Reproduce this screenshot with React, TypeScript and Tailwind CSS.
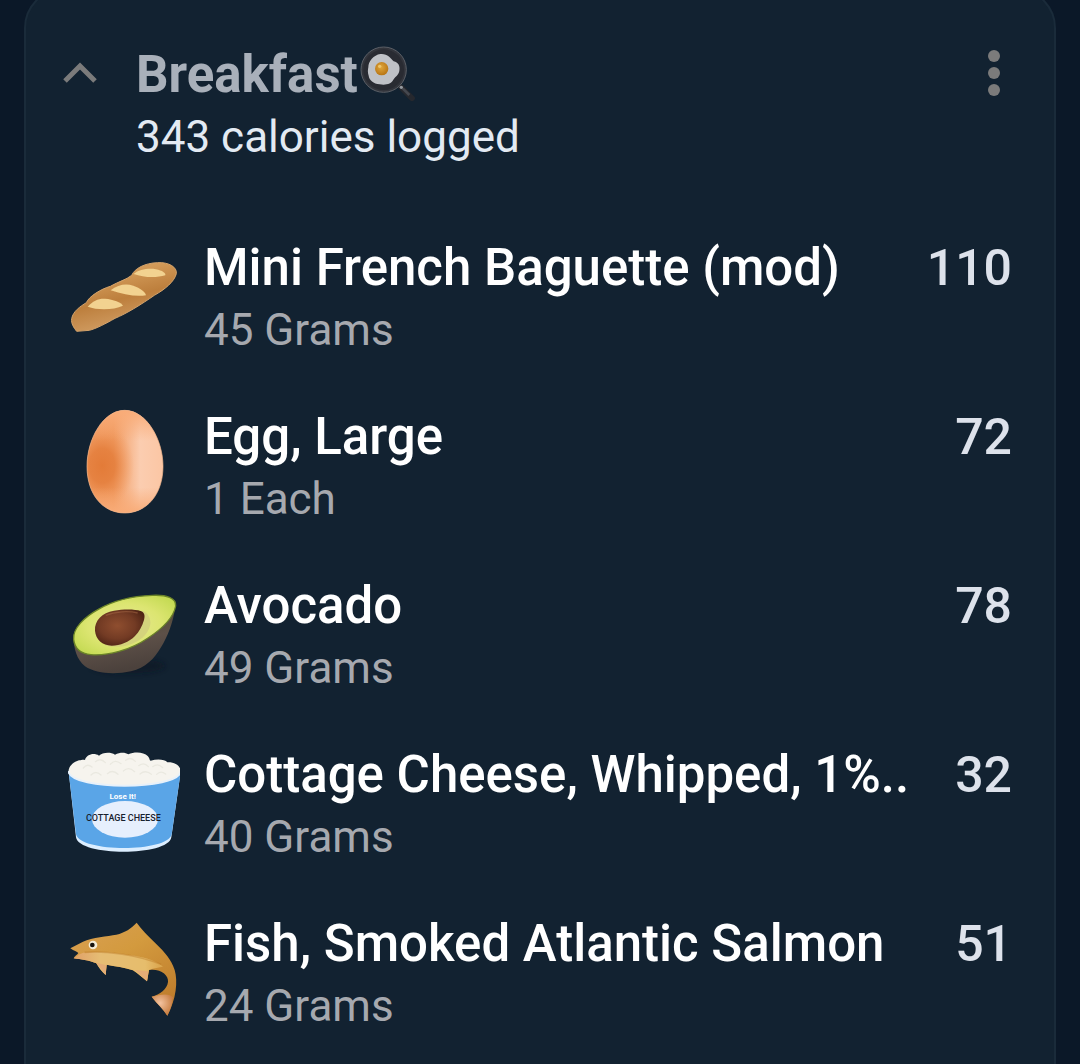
import type { ReactNode } from "react";

type FoodItem = {
  id: string;
  name: string;
  amount: string;
  calories: number;
  icon: ReactNode;
};

const iconClass = "h-[120px] w-[112px] shrink-0";

function BaguetteIcon() {
  return (
    <svg viewBox="39 -6 336 360" className={iconClass} aria-hidden="true">
      <defs>
        <linearGradient id="crust" x1="0.35" y1="0.2" x2="0.6" y2="0.85">
          <stop offset="0" stopColor="#d29a58" />
          <stop offset="0.5" stopColor="#bd7f3d" />
          <stop offset="1" stopColor="#cf9a5f" />
        </linearGradient>
      </defs>
      <path
        d="M50 236C54 214 76 199 94 188C102 169 138 147 166 139C190 125 214 119 230 106C239 85 270 69 308 68C342 66 367 82 364 101C358 125 330 148 298 166C258 194 214 221 180 235C152 251 123 266 103 271L65 274C56 262 48 251 50 236Z"
        fill="url(#crust)"
        stroke="#d3a36b"
        strokeWidth="3"
      />
      <path d="M98 200C114 182 130 175 150 176C176 178 198 187 204 197C176 210 128 211 98 200Z" fill="#f2d290" />
      <path d="M167 151C188 134 213 129 235 137C256 145 271 155 273 166C244 171 205 164 167 151Z" fill="#f2d290" />
      <path d="M236 102C252 88 281 84 303 88C322 92 333 99 331 106C304 114 266 113 236 102Z" fill="#f2d290" />
    </svg>
  );
}

function EggIcon() {
  const outline = "M209 31C274 31 324 118 324 199C324 284 274 339 209 339C144 339 96 284 96 199C96 118 144 31 209 31Z";

  return (
    <svg viewBox="39 21 336 360" className={iconClass} aria-hidden="true">
      <defs>
        <linearGradient id="shell" x1="0" y1="0" x2="1" y2="0">
          <stop offset="0" stopColor="#f09a60" />
          <stop offset="0.35" stopColor="#f0995e" />
          <stop offset="0.7" stopColor="#fbcdb0" />
          <stop offset="1" stopColor="#fbc6a4" />
        </linearGradient>
        <radialGradient id="shellShade" cx="0.2" cy="0.54" r="0.42">
          <stop offset="0" stopColor="#e37b38" />
          <stop offset="0.4" stopColor="#e47e3c" stopOpacity="0.85" />
          <stop offset="1" stopColor="#f0995e" stopOpacity="0" />
        </radialGradient>
        <linearGradient id="shellEnds" x1="0" y1="0" x2="0" y2="1">
          <stop offset="0" stopColor="#f9ac78" />
          <stop offset="0.3" stopColor="#f9ac78" stopOpacity="0" />
          <stop offset="0.75" stopColor="#f9ac78" stopOpacity="0" />
          <stop offset="1" stopColor="#f9ac78" />
        </linearGradient>
      </defs>
      <path d={outline} fill="url(#shell)" />
      <path d={outline} fill="url(#shellShade)" />
      <path d={outline} fill="url(#shellEnds)" stroke="#f3b68c" strokeWidth="2" />
    </svg>
  );
}

function AvocadoIcon() {
  return (
    <svg viewBox="39 -12 336 360" className={iconClass} aria-hidden="true">
      <defs>
        <linearGradient id="skin" x1="0" y1="0" x2="0.3" y2="1">
          <stop offset="0" stopColor="#4d4a2c" />
          <stop offset="0.6" stopColor="#5d5048" />
          <stop offset="1" stopColor="#4b413c" />
        </linearGradient>
        <radialGradient id="flesh" cx="0.5" cy="0.5" r="0.6">
          <stop offset="0" stopColor="#e6e892" />
          <stop offset="0.6" stopColor="#dce571" />
          <stop offset="1" stopColor="#c6db55" />
        </radialGradient>
        <radialGradient id="pit" cx="0.45" cy="0.45" r="0.6">
          <stop offset="0" stopColor="#8f4e2f" />
          <stop offset="0.6" stopColor="#733b24" />
          <stop offset="1" stopColor="#4f2415" />
        </radialGradient>
        <filter id="avocadoShadow" x="-20%" y="-50%" width="140%" height="200%">
          <feGaussianBlur stdDeviation="8" />
        </filter>
      </defs>
      <ellipse cx="220" cy="258" rx="110" ry="22" fill="#0a1522" opacity="0.6" filter="url(#avocadoShadow)" />
      <path d="M55 172C57 205 64 238 90 259C122 281 178 285 228 274C272 263 297 238 318 202C338 169 353 130 360 86Z" fill="url(#skin)" />
      <path
        d="M56 178C53 145 88 111 130 88C176 61 240 48 292 46C334 44 364 53 362 78C356 111 323 145 279 174C225 211 158 228 108 224C78 221 59 207 56 178Z"
        fill="url(#flesh)"
        stroke="#6b8428"
        strokeWidth="4"
      />
      <path d="M150 196C205 212 278 184 286 132C287 112 278 98 262 92Z" fill="#cfca7c" opacity="0.7" />
      <path
        d="M120 152C118 122 141 98 177 92C205 87 240 87 257 93C268 97 271 106 267 120C262 138 252 156 240 168C222 186 196 197 170 197C142 196 122 178 120 152Z"
        fill="url(#pit)"
      />
      <path d="M152 106C180 94 222 92 248 99" fill="none" stroke="#a96a48" strokeWidth="4" opacity="0.5" />
    </svg>
  );
}

function CottageCheeseIcon() {
  return (
    <svg viewBox="39 15 336 360" className={iconClass} aria-hidden="true">
      <path
        d="M41 98C39 80 54 66 72 61C80 60 84 58 90 60C94 44 116 37 132 47C141 38 166 35 180 44C196 36 211 37 220 43C239 34 267 36 278 48C286 57 283 62 287 62C307 56 330 58 337 67C361 66 377 78 377 94C374 128 340 138 210 141C90 140 48 132 41 98Z"
        fill="#f6f4ee"
      />
      <g fill="none" stroke="#e3e2d8" strokeWidth="4" strokeLinecap="round" opacity="0.6">
        <path d="M85 84q12-15 26-3M121 65q16-13 30 3M166 73q14-17 32-2M212 61q15-12 29 3M251 77q16-12 29 3M293 80q16-12 30 3" />
        <path d="M108 105q14-15 30 0M157 101q16-14 32 2M205 93q16-15 34 2M255 102q16-14 34 1M305 103q12-13 27-1" />
      </g>
      <path d="M41 96C54 151 364 151 377 96L349 292C340 350 72 350 63 292Z" fill="#dceeff" />
      <path d="M41 96C54 151 364 151 377 96L350 283C338 338 76 338 63 283Z" fill="#5aa5e7" />
      <path d="M41 96C54 151 364 151 377 96" fill="none" stroke="#e8f1fa" strokeWidth="6" strokeLinecap="round" />
      <ellipse cx="210" cy="238" rx="99" ry="55" fill="#e6effd" />
      <text
        x="203"
        y="177"
        textAnchor="middle"
        fill="#ffffff"
        className="font-[Roboto,sans-serif] text-[24px] font-bold"
      >
        Lose It!
      </text>
      <text
        x="205"
        y="243"
        textAnchor="middle"
        fill="#16202e"
        className="font-[Roboto,sans-serif] text-[27px] font-medium"
      >
        COTTAGE CHEESE
      </text>
    </svg>
  );
}

function FishIcon() {
  return (
    <svg viewBox="39 12 336 360" className={iconClass} aria-hidden="true">
      <defs>
        <linearGradient id="fishBack" x1="0" y1="0" x2="0.7" y2="1">
          <stop offset="0" stopColor="#d9a054" />
          <stop offset="0.45" stopColor="#d39a3e" />
          <stop offset="1" stopColor="#bf7d2c" />
        </linearGradient>
        <linearGradient id="fishBelly" x1="0" y1="0" x2="1" y2="0">
          <stop offset="0" stopColor="#e0a068" />
          <stop offset="0.3" stopColor="#e6bd74" />
          <stop offset="0.8" stopColor="#e6bd6c" />
          <stop offset="1" stopColor="#d9a24a" />
        </linearGradient>
        <radialGradient id="fishTail" cx="0.4" cy="0.4" r="0.6">
          <stop offset="0" stopColor="#f3c3a0" />
          <stop offset="1" stopColor="#c97f43" />
        </radialGradient>
      </defs>
      <path
        d="M46 115L84 95C112 82 158 79 184 74C210 68 229 55 245 38C259 58 280 79 303 101C330 127 349 149 359 180C369 214 364 267 337 317C325 297 307 282 290 260C315 254 336 238 339 216C342 195 316 175 282 180L276 214C261 201 249 191 234 181C209 172 181 169 155 164L152 195C140 184 132 174 124 160C100 150 78 149 56 145C57 139 68 134 70 129C66 125 57 123 46 115Z"
        fill="url(#fishBack)"
      />
      <path
        d="M56 145C67 137 74 132 85 128C131 123 189 128 226 136C261 140 303 151 324 170C313 172 296 174 282 180L276 214C261 201 249 191 234 181C209 172 181 169 155 164L152 195C140 184 132 174 124 160C100 150 78 149 56 145Z"
        fill="url(#fishBelly)"
      />
      <path d="M89 127C150 123 240 132 318 163" fill="none" stroke="#b87521" strokeWidth="5" opacity="0.4" />
      <path d="M290 260C313 256 338 247 354 262C352 281 347 298 337 317C325 297 307 282 290 260Z" fill="url(#fishTail)" />
      <path d="M124 158L152 195L154 166ZM240 180L276 214L280 184Z" fill="#e3a878" opacity="0.8" />
      <circle cx="114" cy="105" r="13" fill="#f5ecd6" />
      <circle cx="112" cy="105" r="7" fill="#17130f" />
    </svg>
  );
}

function PanIcon() {
  return (
    <svg viewBox="57 33 174 180" className="h-[60px] w-[58px]" role="img" aria-label="Fried egg in a pan">
      <defs>
        <radialGradient id="yolk" cx="0.45" cy="0.4" r="0.6">
          <stop offset="0" stopColor="#e0a63c" />
          <stop offset="1" stopColor="#b87514" />
        </radialGradient>
      </defs>
      <path d="M186 160L219 193" stroke="#26282e" strokeWidth="17" strokeLinecap="round" />
      <path d="M191 163L211 183" stroke="#45484f" strokeWidth="8" />
      <circle cx="134" cy="107" r="68" fill="#33353c" stroke="#5b5f66" strokeWidth="3" />
      <circle cx="134" cy="107" r="61" fill="#292b32" />
      <path
        d="M88 100C88 82 104 63 124 60C145 58 155 72 164 82C178 85 184 96 181 111C178 125 170 126 164 136C157 151 139 154 122 151C103 149 91 139 89 125C86 117 86 109 88 100Z"
        fill="#bfc1c6"
      />
      <circle cx="128" cy="104" r="20" fill="url(#yolk)" />
      <circle cx="122" cy="97" r="5" fill="#edc56c" />
      <circle cx="187" cy="160" r="5" fill="#969ba1" />
    </svg>
  );
}

const items: FoodItem[] = [
  { id: "baguette", name: "Mini French Baguette (mod)", amount: "45 Grams", calories: 110, icon: <BaguetteIcon /> },
  { id: "egg", name: "Egg, Large", amount: "1 Each", calories: 72, icon: <EggIcon /> },
  { id: "avocado", name: "Avocado", amount: "49 Grams", calories: 78, icon: <AvocadoIcon /> },
  { id: "cottage", name: "Cottage Cheese, Whipped, 1%..", amount: "40 Grams", calories: 32, icon: <CottageCheeseIcon /> },
  { id: "salmon", name: "Fish, Smoked Atlantic Salmon", amount: "24 Grams", calories: 51, icon: <FishIcon /> },
];

function FoodRow({ item }: { item: FoodItem }) {
  return (
    <li className="flex items-center gap-6">
      {item.icon}
      <div className="min-w-0 flex-1">
        <div className="flex justify-between gap-6">
          <h3 className="truncate text-[51px] leading-[64px] font-medium text-white">{item.name}</h3>
          <span className="text-[50px] leading-[64px] font-medium text-[#dde2eb]">{item.calories}</span>
        </div>
        <p className="text-[44px] leading-[60px] text-[#a6a9af]">{item.amount}</p>
      </div>
    </li>
  );
}

export default function App() {
  const total = items.reduce((sum, item) => sum + item.calories, 0);

  return (
    <main className="flex min-h-screen flex-col overflow-hidden bg-[#0b1828] px-6 font-[Roboto,sans-serif]">
      <section className="-mt-3 flex-1 rounded-t-[40px] border-2 border-[#1a2b3a] bg-[#122231] px-[42px] pt-[53px] pb-9">
        <header className="flex items-start">
          <button type="button" aria-label="Collapse Breakfast" className="-ml-1.5 flex h-[60px] w-[74px] items-center">
            <svg viewBox="0 0 36 24" className="h-6 w-9" fill="none" stroke="#7b7b7b" strokeWidth="5">
              <path d="M3 20L18 5L33 20" />
            </svg>
          </button>
          <div className="flex-1">
            <h2 className="flex items-center text-[51px] leading-[64px] font-bold text-[#a9b0ba]">
              Breakfast
              <PanIcon />
            </h2>
            <p className="text-[44px] leading-[60px] text-[#e3eaf3]">{total} calories logged</p>
          </div>
          <button type="button" aria-label="More options" className="flex h-[60px] w-9 items-center justify-center">
            <svg viewBox="0 0 12 46" className="h-[46px] w-3" fill="#7b7b7b">
              <circle cx="6" cy="6" r="6" />
              <circle cx="6" cy="23" r="6" />
              <circle cx="6" cy="40" r="6" />
            </svg>
          </button>
        </header>
        <ul className="mt-[69px] flex flex-col gap-[45px]">
          {items.map((item) => (
            <FoodRow key={item.id} item={item} />
          ))}
        </ul>
      </section>
    </main>
  );
}
